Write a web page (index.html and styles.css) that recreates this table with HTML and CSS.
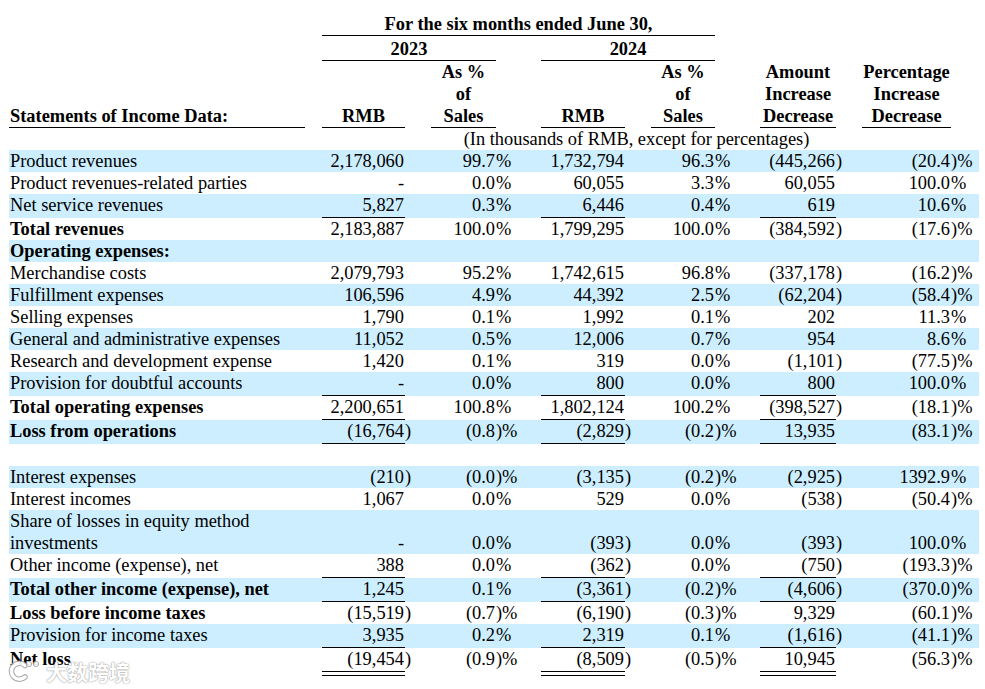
FILE: index.html
```html
<!DOCTYPE html>
<html lang="en">
<head>
<meta charset="utf-8">
<title>Statements of Income Data</title>
<link rel="stylesheet" href="styles.css">
</head>
<body>
<div class="page">
<table class="fin">
<colgroup>
<col class="c-lab"><col class="c-g1"><col class="c-rmb23"><col class="c-p1"><col class="c-pct23"><col class="c-s1"><col class="c-rmb24"><col class="c-p2"><col class="c-pct24"><col class="c-s2"><col class="c-amt"><col class="c-p3"><col class="c-chg"><col class="c-s3">
</colgroup>
<thead>
<tr class="h1">
<th></th><th></th><th colspan="7" class="u">For the six months ended June 30,</th><th></th><th></th><th></th><th></th><th></th>
</tr>
<tr class="h2">
<th></th><th></th><th colspan="3" class="u">2023</th><th></th><th colspan="3" class="u">2024</th><th></th><th></th><th></th><th></th><th></th>
</tr>
<tr class="h3">
<th class="u hl">Statements of Income Data:</th><th></th>
<th class="u">RMB</th><th></th>
<th class="u">As %<br>of<br>Sales</th><th></th>
<th class="u">RMB</th><th></th>
<th class="u">As %<br>of<br>Sales</th><th></th>
<th class="u">Amount<br>Increase<br>Decrease</th><th></th>
<th class="u">Percentage<br>Increase<br>Decrease</th><th></th>
</tr>
<tr class="h4">
<th></th><th></th><th colspan="11" class="note">(In thousands of RMB, except for percentages)</th><th></th>
</tr>
</thead>
<tbody>
<tr class="bl">
<td class="lab">Product revenues</td><td></td>
<td class="n">2,178,060</td><td class="p"></td><td class="n">99.7</td><td class="p">%</td>
<td class="n">1,732,794</td><td class="p"></td><td class="n">96.3</td><td class="p">%</td>
<td class="n">(445,266</td><td class="p">)</td><td class="n">(20.4</td><td class="p">)%</td>
</tr>
<tr>
<td class="lab">Product revenues-related parties</td><td></td>
<td class="n">-</td><td class="p"></td><td class="n">0.0</td><td class="p">%</td>
<td class="n">60,055</td><td class="p"></td><td class="n">3.3</td><td class="p">%</td>
<td class="n">60,055</td><td class="p"></td><td class="n">100.0</td><td class="p">%</td>
</tr>
<tr class="bl ul">
<td class="lab">Net service revenues</td><td></td>
<td class="n u">5,827</td><td class="p"></td><td class="n">0.3</td><td class="p">%</td>
<td class="n u">6,446</td><td class="p"></td><td class="n">0.4</td><td class="p">%</td>
<td class="n u">619</td><td class="p"></td><td class="n">10.6</td><td class="p">%</td>
</tr>
<tr>
<td class="lab b">Total revenues</td><td></td>
<td class="n">2,183,887</td><td class="p"></td><td class="n">100.0</td><td class="p">%</td>
<td class="n">1,799,295</td><td class="p"></td><td class="n">100.0</td><td class="p">%</td>
<td class="n">(384,592</td><td class="p">)</td><td class="n">(17.6</td><td class="p">)%</td>
</tr>
<tr class="bl">
<td class="lab b">Operating expenses:</td><td></td>
<td></td><td></td><td></td><td></td><td></td><td></td><td></td><td></td><td></td><td></td><td></td><td></td>
</tr>
<tr>
<td class="lab">Merchandise costs</td><td></td>
<td class="n">2,079,793</td><td class="p"></td><td class="n">95.2</td><td class="p">%</td>
<td class="n">1,742,615</td><td class="p"></td><td class="n">96.8</td><td class="p">%</td>
<td class="n">(337,178</td><td class="p">)</td><td class="n">(16.2</td><td class="p">)%</td>
</tr>
<tr class="bl">
<td class="lab">Fulfillment expenses</td><td></td>
<td class="n">106,596</td><td class="p"></td><td class="n">4.9</td><td class="p">%</td>
<td class="n">44,392</td><td class="p"></td><td class="n">2.5</td><td class="p">%</td>
<td class="n">(62,204</td><td class="p">)</td><td class="n">(58.4</td><td class="p">)%</td>
</tr>
<tr>
<td class="lab">Selling expenses</td><td></td>
<td class="n">1,790</td><td class="p"></td><td class="n">0.1</td><td class="p">%</td>
<td class="n">1,992</td><td class="p"></td><td class="n">0.1</td><td class="p">%</td>
<td class="n">202</td><td class="p"></td><td class="n">11.3</td><td class="p">%</td>
</tr>
<tr class="bl">
<td class="lab">General and administrative expenses</td><td></td>
<td class="n">11,052</td><td class="p"></td><td class="n">0.5</td><td class="p">%</td>
<td class="n">12,006</td><td class="p"></td><td class="n">0.7</td><td class="p">%</td>
<td class="n">954</td><td class="p"></td><td class="n">8.6</td><td class="p">%</td>
</tr>
<tr>
<td class="lab">Research and development expense</td><td></td>
<td class="n">1,420</td><td class="p"></td><td class="n">0.1</td><td class="p">%</td>
<td class="n">319</td><td class="p"></td><td class="n">0.0</td><td class="p">%</td>
<td class="n">(1,101</td><td class="p">)</td><td class="n">(77.5</td><td class="p">)%</td>
</tr>
<tr class="bl ul">
<td class="lab">Provision for doubtful accounts</td><td></td>
<td class="n u">-</td><td class="p"></td><td class="n">0.0</td><td class="p">%</td>
<td class="n u">800</td><td class="p"></td><td class="n">0.0</td><td class="p">%</td>
<td class="n u">800</td><td class="p"></td><td class="n">100.0</td><td class="p">%</td>
</tr>
<tr class="ul">
<td class="lab b">Total operating expenses</td><td></td>
<td class="n u">2,200,651</td><td class="p"></td><td class="n">100.8</td><td class="p">%</td>
<td class="n u">1,802,124</td><td class="p"></td><td class="n">100.2</td><td class="p">%</td>
<td class="n u">(398,527</td><td class="p">)</td><td class="n">(18.1</td><td class="p">)%</td>
</tr>
<tr class="bl ul">
<td class="lab b">Loss from operations</td><td></td>
<td class="n u">(16,764</td><td class="p">)</td><td class="n">(0.8</td><td class="p">)%</td>
<td class="n u">(2,829</td><td class="p">)</td><td class="n">(0.2</td><td class="p">)%</td>
<td class="n u">13,935</td><td class="p"></td><td class="n">(83.1</td><td class="p">)%</td>
</tr>
<tr class="blank">
<td class="lab">&nbsp;</td><td></td><td></td><td></td><td></td><td></td><td></td><td></td><td></td><td></td><td></td><td></td><td></td><td></td>
</tr>
<tr class="bl">
<td class="lab">Interest expenses</td><td></td>
<td class="n">(210</td><td class="p">)</td><td class="n">(0.0</td><td class="p">)%</td>
<td class="n">(3,135</td><td class="p">)</td><td class="n">(0.2</td><td class="p">)%</td>
<td class="n">(2,925</td><td class="p">)</td><td class="n">1392.9</td><td class="p">%</td>
</tr>
<tr>
<td class="lab">Interest incomes</td><td></td>
<td class="n">1,067</td><td class="p"></td><td class="n">0.0</td><td class="p">%</td>
<td class="n">529</td><td class="p"></td><td class="n">0.0</td><td class="p">%</td>
<td class="n">(538</td><td class="p">)</td><td class="n">(50.4</td><td class="p">)%</td>
</tr>
<tr class="bl">
<td class="lab">Share of losses in equity method investments</td><td></td>
<td class="n">-</td><td class="p"></td><td class="n">0.0</td><td class="p">%</td>
<td class="n">(393</td><td class="p">)</td><td class="n">0.0</td><td class="p">%</td>
<td class="n">(393</td><td class="p">)</td><td class="n">100.0</td><td class="p">%</td>
</tr>
<tr class="ul">
<td class="lab">Other income (expense), net</td><td></td>
<td class="n u">388</td><td class="p"></td><td class="n">0.0</td><td class="p">%</td>
<td class="n u">(362</td><td class="p">)</td><td class="n">0.0</td><td class="p">%</td>
<td class="n u">(750</td><td class="p">)</td><td class="n">(193.3</td><td class="p">)%</td>
</tr>
<tr class="bl ul">
<td class="lab b">Total other income (expense), net</td><td></td>
<td class="n u">1,245</td><td class="p"></td><td class="n">0.1</td><td class="p">%</td>
<td class="n u">(3,361</td><td class="p">)</td><td class="n">(0.2</td><td class="p">)%</td>
<td class="n u">(4,606</td><td class="p">)</td><td class="n">(370.0</td><td class="p">)%</td>
</tr>
<tr>
<td class="lab b">Loss before income taxes</td><td></td>
<td class="n">(15,519</td><td class="p">)</td><td class="n">(0.7</td><td class="p">)%</td>
<td class="n">(6,190</td><td class="p">)</td><td class="n">(0.3</td><td class="p">)%</td>
<td class="n">9,329</td><td class="p"></td><td class="n">(60.1</td><td class="p">)%</td>
</tr>
<tr class="bl ul">
<td class="lab">Provision for income taxes</td><td></td>
<td class="n u">3,935</td><td class="p"></td><td class="n">0.2</td><td class="p">%</td>
<td class="n u">2,319</td><td class="p"></td><td class="n">0.1</td><td class="p">%</td>
<td class="n u">(1,616</td><td class="p">)</td><td class="n">(41.1</td><td class="p">)%</td>
</tr>
<tr class="dl">
<td class="lab b">Net loss</td><td></td>
<td class="n d">(19,454</td><td class="p">)</td><td class="n">(0.9</td><td class="p">)%</td>
<td class="n d">(8,509</td><td class="p">)</td><td class="n">(0.5</td><td class="p">)%</td>
<td class="n d">10,945</td><td class="p"></td><td class="n">(56.3</td><td class="p">)%</td>
</tr>
</tbody>
</table>
<div class="watermark">
<svg class="wm-logo" width="34" height="22" viewBox="0 0 34 22">
<path d="M17 5.5 A8 8 0 1 0 17 17" fill="none" stroke="#a0a0a0" stroke-width="5.5" stroke-linecap="round"/>
<path d="M17 5.5 A8 8 0 1 0 17 17" fill="none" stroke="#ffffff" stroke-width="3.5" stroke-linecap="round"/>
<circle cx="21" cy="4" r="2.6" fill="#fff" stroke="#a0a0a0" stroke-width="1"/>
<circle cx="28" cy="4" r="2.6" fill="#fff" stroke="#a0a0a0" stroke-width="1"/>
</svg>
<span class="wm-text">大数跨境</span>
</div>
</div>
</body>
</html>
```

FILE: styles.css
```css
html, body {
  margin: 0;
  padding: 0;
  background: #ffffff;
  min-height: 689px;
}

.page {
  position: relative;
  min-height: 676px;
  padding: 13px 0 0 9px;
}

.fin {
  border-collapse: separate;
  border-spacing: 0;
  table-layout: fixed;
  width: 970px;
  font-family: "Liberation Serif", "Times New Roman", serif;
  font-size: 18.4px;
  line-height: 22px;
  color: #000;
}

.c-lab { width: 296px; }
.c-g1 { width: 17px; }
.c-rmb23 { width: 83px; }
.c-p1 { width: 26px; }
.c-pct23 { width: 65px; }
.c-s1 { width: 45px; }
.c-rmb24 { width: 84px; }
.c-p2 { width: 26px; }
.c-pct24 { width: 64px; }
.c-s2 { width: 45px; }
.c-amt { width: 76px; }
.c-p3 { width: 26px; }
.c-chg { width: 89px; }
.c-s3 { width: 28px; }

.fin th,
.fin td {
  padding: 0;
  vertical-align: bottom;
  white-space: nowrap;
}

.fin th {
  font-weight: bold;
  text-align: center;
}

.fin th.u,
.fin td.u {
  border-bottom: 1px solid #000;
}

.h2 th {
  padding-top: 2px;
}

.fin th.hl {
  text-align: left;
  padding-left: 1px;
}

.fin th.note {
  font-weight: normal;
}

.fin td.lab {
  padding-left: 1px;
  white-space: normal;
}

.fin td.b {
  font-weight: bold;
}

.fin td.n {
  text-align: right;
  padding-right: 1px;
}

.fin td.p {
  text-align: left;
}

.fin tr.bl td {
  background: #cceeff;
}

.fin tr.ul td {
  padding-bottom: 2px;
}

.fin tr.ul td.u {
  padding-bottom: 1px;
}

.fin tr.dl td {
  padding-bottom: 6px;
}

.fin tr.dl td.d {
  padding-bottom: 5px;
  border-bottom: 1px solid #000;
  background: linear-gradient(#000, #000) no-repeat left 0 bottom 3px / 100% 1px;
}

.watermark {
  position: absolute;
  left: 8px;
  top: 660px;
  display: flex;
  align-items: center;
  gap: 4px;
  opacity: 0.9;
}

.wm-logo {
  display: block;
}

.wm-text {
  font-family: "Noto Sans CJK SC", sans-serif;
  font-weight: bold;
  font-size: 21px;
  line-height: 22px;
  color: #ffffff;
  text-shadow: 0 0 1px #888, 0 0 2px rgba(0, 0, 0, 0.35);
  letter-spacing: 0;
}
```
